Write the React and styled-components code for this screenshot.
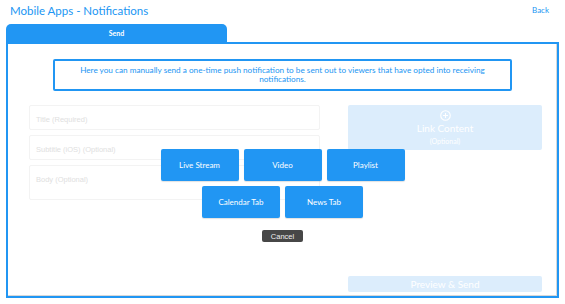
import React from "react";
import styled, { createGlobalStyle } from "styled-components";

const Global = createGlobalStyle`
  html, body { margin: 0; padding: 0; background: #fff; }
  body { font-family: "Lato", "Liberation Sans", sans-serif; }
  * { box-sizing: border-box; }
`;

const BLUE = "#2196f3";
const PALE = "#dcedfc";

const Page = styled.div`
  width: 565px;
  height: 304px;
  display: flex;
  flex-direction: column;
`;

const Header = styled.header`
  display: flex;
  justify-content: space-between;
  align-items: flex-start;
  padding: 4px 16px 0 10px;
  height: 24px;
`;

const Title = styled.h1`
  margin: 0;
  font-size: 11.5px;
  line-height: 14px;
  font-weight: 400;
  color: ${BLUE};
`;

const Back = styled.a`
  font-size: 8px;
  color: ${BLUE};
  margin-top: 1px;
  cursor: pointer;
`;

const Tabs = styled.div`
  display: flex;
  padding-left: 6px;
`;

const Tab = styled.div`
  width: 221px;
  height: 18px;
  background: ${BLUE};
  border-radius: 5px 5px 0 0;
  color: #fff;
  font-size: 7px;
  font-weight: 700;
  display: flex;
  align-items: center;
  justify-content: center;
`;

const Panel = styled.section`
  position: relative;
  margin: 0 6px 0 6px;
  height: 256px;
  border: 2px solid ${BLUE};
  box-shadow: inset -1px -1px 0 #d8d8d8;
  display: flex;
  flex-direction: column;
  padding: 15px 15px 0 21px;
`;

const Info = styled.div`
  margin: 0 30px 0 24px;
  height: 32px;
  border: 2px solid ${BLUE};
  border-radius: 2px;
  color: ${BLUE};
  font-size: 8.2px;
  line-height: 9px;
  text-align: center;
  display: flex;
  align-items: center;
  justify-content: center;
  padding: 0 18px;
`;

const Form = styled.div`
  display: grid;
  grid-template-columns: 291px 194px;
  column-gap: 28px;
  margin-top: 14px;
  flex: 1;
`;

const Fields = styled.div`
  display: flex;
  flex-direction: column;
  gap: 5px;
`;

const Field = styled.div`
  height: ${(p) => p.$h}px;
  border: 1px solid #f3f3f3;
  border-radius: 2px;
  color: #e0e0e0;
  font-family: "Liberation Sans", sans-serif;
  font-size: 7.5px;
  padding: 9px 6px 0;
`;

const Side = styled.div`
  display: flex;
  flex-direction: column;
  justify-content: space-between;
  padding-bottom: 4px;
`;

const LinkBox = styled.div`
  height: 45px;
  background: ${PALE};
  border-radius: 2px;
  color: #fff;
  display: flex;
  flex-direction: column;
  align-items: center;
  padding-top: 5px;
`;

const LinkLabel = styled.div`
  font-size: 10px;
  margin-top: 1px;
`;

const LinkSub = styled.div`
  font-size: 7px;
  margin-top: 3px;
`;

const Preview = styled.div`
  height: 16px;
  background: ${PALE};
  border-radius: 2px;
  color: #fff;
  font-size: 10px;
  display: flex;
  align-items: center;
  justify-content: center;
`;

const Modal = styled.div`
  position: absolute;
  left: 0;
  right: 0;
  top: 105px;
  display: flex;
  flex-direction: column;
  align-items: center;
`;

const Row = styled.div`
  display: flex;
  gap: 5px;
  margin-bottom: 5px;
`;

const Choice = styled.button`
  width: 78px;
  height: 32px;
  border: none;
  border-radius: 2px;
  background: ${BLUE};
  color: #fff;
  font-family: "Lato", "Liberation Sans", sans-serif;
  font-size: 8px;
  box-shadow: 0 1px 1px rgba(0, 0, 0, 0.12);
  cursor: pointer;
`;

const Cancel = styled.button`
  margin-top: 7px;
  width: 41px;
  height: 12px;
  border: none;
  border-radius: 2px;
  background: #474747;
  color: #f0f0f0;
  font-family: "Liberation Sans", sans-serif;
  font-size: 7.5px;
  padding: 0;
  cursor: pointer;
`;

const PlusIcon = () => (
  <svg width="11" height="11" viewBox="0 0 12 12" fill="none" stroke="#fff" strokeWidth="1.2">
    <circle cx="6" cy="6" r="5.2" />
    <path d="M6 3.3v5.4M3.3 6h5.4" />
  </svg>
);

export default function App() {
  return (
    <Page>
      <Global />
      <Header>
        <Title>Mobile Apps - Notifications</Title>
        <Back>Back</Back>
      </Header>
      <Tabs>
        <Tab>Send</Tab>
      </Tabs>
      <Panel>
        <Info>
          Here you can manually send a one-time push notification to be sent out to viewers that have opted into receiving notifications.
        </Info>
        <Form>
          <Fields>
            <Field $h={25}>Title (Required)</Field>
            <Field $h={25}>Subtitle (iOS) (Optional)</Field>
            <Field $h={35}>Body (Optional)</Field>
          </Fields>
          <Side>
            <LinkBox>
              <PlusIcon />
              <LinkLabel>Link Content</LinkLabel>
              <LinkSub>(Optional)</LinkSub>
            </LinkBox>
            <Preview>Preview &amp; Send</Preview>
          </Side>
        </Form>
        <Modal>
          <Row>
            <Choice>Live Stream</Choice>
            <Choice>Video</Choice>
            <Choice>Playlist</Choice>
          </Row>
          <Row>
            <Choice>Calendar Tab</Choice>
            <Choice>News Tab</Choice>
          </Row>
          <Cancel>Cancel</Cancel>
        </Modal>
      </Panel>
    </Page>
  );
}
